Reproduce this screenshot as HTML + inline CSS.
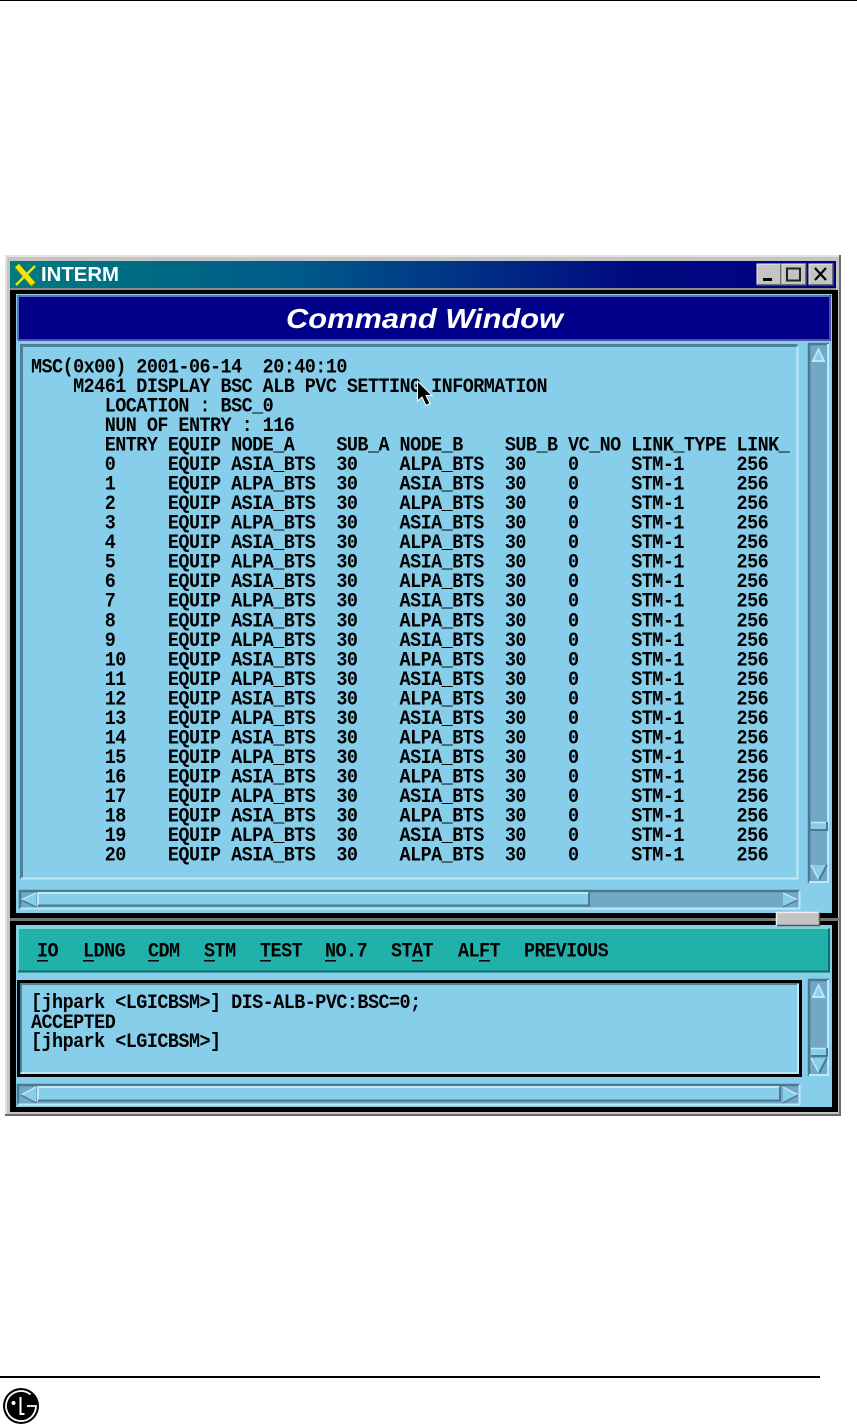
<!DOCTYPE html>
<html><head><meta charset="utf-8"><style>
html,body{margin:0;padding:0;background:#fff;width:857px;height:1425px;overflow:hidden}
svg{display:block}
.m{font:bold 20.500px "Liberation Mono",monospace;letter-spacing:-.6px;white-space:pre;fill:#000}
</style></head><body>
<svg width="857" height="1425" viewBox="0 0 857 1425" xmlns="http://www.w3.org/2000/svg">
<defs><linearGradient id="t" x1="0" x2="1" y1="0" y2="0"><stop offset="0" stop-color="#007a7e"/><stop offset=".35" stop-color="#005a8a"/><stop offset=".75" stop-color="#000a80"/><stop offset="1" stop-color="#000080"/></linearGradient></defs>
<rect x="0" y="0" width="857" height="1" fill="#000"/>
<rect x="0" y="1376" width="820" height="2" fill="#000"/>
<!-- window frame -->
<rect x="5" y="255" width="836" height="861" fill="#c4c4c4"/>
<rect x="5" y="255" width="836" height="2" fill="#e2e2e2"/>
<rect x="5" y="255" width="2" height="861" fill="#e2e2e2"/>
<rect x="839" y="255" width="2" height="861" fill="#6a6a6a"/>
<rect x="5" y="1114" width="836" height="2" fill="#6a6a6a"/>
<rect x="10" y="261" width="826" height="27" fill="url(#t)"/>
<rect x="10" y="288" width="826" height="2" fill="#8a8a8a"/>
<rect x="10" y="290" width="828" height="822" fill="#000"/>
<rect x="16" y="294" width="816" height="619" fill="#87ceeb"/>
<rect x="10" y="918" width="831" height="3" fill="#777"/>
<rect x="16" y="925" width="816" height="182" fill="#87ceeb"/>
<!-- title -->
<path d="M17 266l17 19" stroke="#8a7c00" stroke-width="6"/>
<path d="M35 266l-19 19" stroke="#f4e600" stroke-width="2.500"/>
<path d="M17 265.500l16 18.500" stroke="#f4e600" stroke-width="5"/>
<text x="41" y="281" font-family="Liberation Sans,sans-serif" font-size="20" font-weight="bold" fill="#fff" textLength="78" lengthAdjust="spacingAndGlyphs">INTERM</text>
<g>
<rect x="757" y="264" width="24" height="21" fill="#c4c4c4"/><path d="M757 285v-21h24" fill="none" stroke="#eee" stroke-width="1"/><path d="M757 285h24v-21" fill="none" stroke="#555" stroke-width="1.500"/>
<rect x="763" y="278" width="9" height="3" fill="#000"/>
<rect x="782" y="264" width="24" height="21" fill="#c4c4c4"/><path d="M782 285v-21h24" fill="none" stroke="#eee" stroke-width="1"/><path d="M782 285h24v-21" fill="none" stroke="#555" stroke-width="1.500"/>
<rect x="787" y="268.500" width="13" height="12" fill="none" stroke="#222" stroke-width="2"/>
<rect x="809" y="264" width="24" height="21" fill="#c4c4c4"/><path d="M809 285v-21h24" fill="none" stroke="#eee" stroke-width="1"/><path d="M809 285h24v-21" fill="none" stroke="#555" stroke-width="1.500"/>
<path d="M815 268l11 12M826 268l-11 12" stroke="#000" stroke-width="2.200"/>
</g>
<!-- Command bar -->
<rect x="17" y="295" width="814" height="45" fill="#000088"/>
<path d="M18 340v-44h812" fill="none" stroke="#6a6ac4" stroke-width="2"/>
<path d="M18 340h812v-44" fill="none" stroke="#5252a8" stroke-width="2"/>
<text x="286" y="328" font-family="Liberation Sans,sans-serif" font-size="28" font-weight="bold" font-style="italic" fill="#fff" textLength="277" lengthAdjust="spacingAndGlyphs">Command Window</text>
<!-- main text area -->
<path d="M21.500 879v-533.500h776" fill="none" stroke="#4f8196" stroke-width="3"/>
<path d="M21 878.500h776.500v-532" fill="none" stroke="#bfe8f7" stroke-width="2"/>
<!-- v scroll 1 -->
<rect x="808" y="343" width="21" height="540" fill="#72a8c6"/>
<path d="M809 883v-539h20" fill="none" stroke="#4a7a90" stroke-width="2.500"/>
<path d="M809 882h19v-538" fill="none" stroke="#bfe8f7" stroke-width="2"/>
<path d="M818.500 347l7 15h-14z" fill="#bfe8f7"/><path d="M818.500 351l4 9h-8z" fill="#87ceeb"/>
<rect x="811" y="822" width="16" height="9" fill="#87ceeb"/><path d="M811 831v-1h16v-8" fill="none" stroke="#4a7a90" stroke-width="2"/><path d="M811 822.500h15" stroke="#bfe8f7" stroke-width="1.500"/>
<path d="M811 865h16l-8 15z" fill="#87ceeb"/><path d="M811 865l8 15" stroke="#bfe8f7" stroke-width="1.500"/><path d="M827 865l-8 15" stroke="#4a7a90" stroke-width="2"/>
<!-- h scroll 1 -->
<rect x="20" y="890" width="780" height="19" fill="#72a8c6"/>
<path d="M20 909v-18h780" fill="none" stroke="#4a7a90" stroke-width="2.500"/>
<path d="M20 908.500h779.500v-18" fill="none" stroke="#bfe8f7" stroke-width="2"/>
<rect x="38" y="893" width="551" height="13" fill="#87ceeb"/>
<path d="M38 906v-13h551" fill="none" stroke="#bfe8f7" stroke-width="2"/>
<path d="M38 905.500h551v-13" fill="none" stroke="#4a7a90" stroke-width="2"/>
<path d="M36 893l-15 7 15 7z" fill="#87ceeb"/><path d="M21 900l15-7" stroke="#bfe8f7" stroke-width="1.500"/><path d="M21 900l15 7" stroke="#4a7a90" stroke-width="1.500"/>
<path d="M783 893l15 7-15 7z" fill="#87ceeb"/><path d="M783 893l15 7" stroke="#bfe8f7" stroke-width="1.500"/><path d="M783 907l15-7" stroke="#4a7a90" stroke-width="1.500"/>
<!-- sash -->
<rect x="776" y="912" width="44" height="14" fill="#c4c4c4"/>
<path d="M776.500 926v-13.500h43" fill="none" stroke="#eee" stroke-width="1.500"/>
<path d="M777 925.500h42.500v-13" fill="none" stroke="#555" stroke-width="1.500"/>
<!-- menu bar -->
<rect x="18" y="928" width="811" height="44" fill="#20b2aa"/>
<path d="M18 972v-44h811" fill="none" stroke="#7fd8d0" stroke-width="2"/>
<path d="M18 971.500h811v-43" fill="none" stroke="#0e6e68" stroke-width="2"/>
<g fill="#000"><rect x="37" y="960" width="11" height="1.500"/><rect x="83" y="960" width="11" height="1.500"/><rect x="148" y="960" width="11" height="1.500"/><rect x="204" y="960" width="11" height="1.500"/><rect x="260" y="960" width="11" height="1.500"/><rect x="325" y="960" width="11" height="1.500"/><rect x="412" y="960" width="11" height="1.500"/><rect x="479" y="960" width="11" height="1.500"/></g>
<!-- lower text area -->
<rect x="17" y="980" width="785" height="97" fill="#000"/>
<rect x="20" y="983" width="779" height="91" fill="#87ceeb"/>
<path d="M21 1073v-89h777" fill="none" stroke="#4f8196" stroke-width="2"/>
<path d="M21 1073h777v-89" fill="none" stroke="#bfe8f7" stroke-width="2"/>
<!-- v scroll 2 -->
<rect x="808" y="979" width="21" height="97" fill="#72a8c6"/>
<path d="M809 1076v-96h20" fill="none" stroke="#4a7a90" stroke-width="2.500"/>
<path d="M809 1075h19v-95" fill="none" stroke="#bfe8f7" stroke-width="2"/>
<path d="M818.500 983l7 15h-14z" fill="#bfe8f7"/><path d="M818.500 987l4 9h-8z" fill="#87ceeb"/>
<rect x="811" y="1048" width="16" height="8" fill="#87ceeb"/><path d="M811 1056h16v-8" fill="none" stroke="#4a7a90" stroke-width="2"/><path d="M811 1048.500h15" stroke="#bfe8f7" stroke-width="1.500"/>
<path d="M811 1058h16l-8 15z" fill="#87ceeb"/><path d="M811 1058l8 15" stroke="#bfe8f7" stroke-width="1.500"/><path d="M827 1058l-8 15" stroke="#4a7a90" stroke-width="2"/>
<!-- h scroll 2 -->
<rect x="18" y="1084" width="782" height="21" fill="#72a8c6"/>
<path d="M18 1105v-20h782" fill="none" stroke="#4a7a90" stroke-width="2.500"/>
<path d="M18 1104.500h781.500v-20" fill="none" stroke="#bfe8f7" stroke-width="2"/>
<rect x="38" y="1087" width="742" height="14" fill="#87ceeb"/>
<path d="M38 1101v-14h742" fill="none" stroke="#bfe8f7" stroke-width="2"/>
<path d="M38 1100.500h742v-14" fill="none" stroke="#4a7a90" stroke-width="2"/>
<path d="M36 1087l-15 8 15 8z" fill="#87ceeb"/><path d="M21 1095l15-8" stroke="#bfe8f7" stroke-width="1.500"/><path d="M21 1095l15 8" stroke="#4a7a90" stroke-width="1.500"/>
<path d="M783 1087l15 8-15 8z" fill="#87ceeb"/><path d="M783 1087l15 8" stroke="#bfe8f7" stroke-width="1.500"/><path d="M783 1103l15-8" stroke="#4a7a90" stroke-width="1.500"/>
<!-- all terminal text, condensed horizontally -->
<g transform="scale(.9,1)">
<text class="m" x="41.100" y="956.500">IO</text>
<text class="m" x="92.200" y="956.500">LDNG</text>
<text class="m" x="164.400" y="956.500">CDM</text>
<text class="m" x="226.700" y="956.500">STM</text>
<text class="m" x="288.900" y="956.500">TEST</text>
<text class="m" x="361.100" y="956.500">NO.7</text>
<text class="m" x="434.400" y="956.500">STAT</text>
<text class="m" x="508.900" y="956.500">ALFT</text>
<text class="m" x="582.200" y="956.500">PREVIOUS</text>
<text class="m" x="34.440" y="1008">[jhpark &lt;LGICBSM&gt;] DIS-ALB-PVC:BSC=0;</text>
<text class="m" x="34.440" y="1028">ACCEPTED</text>
<text class="m" x="34.440" y="1047">[jhpark &lt;LGICBSM&gt;]</text>
<text class="m" x="34.440" y="372.500">MSC(0x00) 2001-06-14  20:40:10</text>
<text class="m" x="34.440" y="392">    M2461 DISPLAY BSC ALB PVC SETTING INFORMATION</text>
<text class="m" x="34.440" y="411.500">       LOCATION : BSC_0</text>
<text class="m" x="34.440" y="431">       NUN OF ENTRY : 116</text>
<text class="m" x="34.440" y="450.600">       ENTRY EQUIP NODE_A    SUB_A NODE_B    SUB_B VC_NO LINK_TYPE LINK_</text>
<text class="m" x="34.440" y="470.100">       0     EQUIP ASIA_BTS  30    ALPA_BTS  30    0     STM-1     256</text>
<text class="m" x="34.440" y="489.600">       1     EQUIP ALPA_BTS  30    ASIA_BTS  30    0     STM-1     256</text>
<text class="m" x="34.440" y="509.100">       2     EQUIP ASIA_BTS  30    ALPA_BTS  30    0     STM-1     256</text>
<text class="m" x="34.440" y="528.700">       3     EQUIP ALPA_BTS  30    ASIA_BTS  30    0     STM-1     256</text>
<text class="m" x="34.440" y="548.200">       4     EQUIP ASIA_BTS  30    ALPA_BTS  30    0     STM-1     256</text>
<text class="m" x="34.440" y="567.700">       5     EQUIP ALPA_BTS  30    ASIA_BTS  30    0     STM-1     256</text>
<text class="m" x="34.440" y="587.200">       6     EQUIP ASIA_BTS  30    ALPA_BTS  30    0     STM-1     256</text>
<text class="m" x="34.440" y="606.700">       7     EQUIP ALPA_BTS  30    ASIA_BTS  30    0     STM-1     256</text>
<text class="m" x="34.440" y="626.300">       8     EQUIP ASIA_BTS  30    ALPA_BTS  30    0     STM-1     256</text>
<text class="m" x="34.440" y="645.800">       9     EQUIP ALPA_BTS  30    ASIA_BTS  30    0     STM-1     256</text>
<text class="m" x="34.440" y="665.300">       10    EQUIP ASIA_BTS  30    ALPA_BTS  30    0     STM-1     256</text>
<text class="m" x="34.440" y="684.800">       11    EQUIP ALPA_BTS  30    ASIA_BTS  30    0     STM-1     256</text>
<text class="m" x="34.440" y="704.300">       12    EQUIP ASIA_BTS  30    ALPA_BTS  30    0     STM-1     256</text>
<text class="m" x="34.440" y="723.900">       13    EQUIP ALPA_BTS  30    ASIA_BTS  30    0     STM-1     256</text>
<text class="m" x="34.440" y="743.400">       14    EQUIP ASIA_BTS  30    ALPA_BTS  30    0     STM-1     256</text>
<text class="m" x="34.440" y="762.900">       15    EQUIP ALPA_BTS  30    ASIA_BTS  30    0     STM-1     256</text>
<text class="m" x="34.440" y="782.400">       16    EQUIP ASIA_BTS  30    ALPA_BTS  30    0     STM-1     256</text>
<text class="m" x="34.440" y="801.900">       17    EQUIP ALPA_BTS  30    ASIA_BTS  30    0     STM-1     256</text>
<text class="m" x="34.440" y="821.500">       18    EQUIP ASIA_BTS  30    ALPA_BTS  30    0     STM-1     256</text>
<text class="m" x="34.440" y="841">       19    EQUIP ALPA_BTS  30    ASIA_BTS  30    0     STM-1     256</text>
<text class="m" x="34.440" y="860.500">       20    EQUIP ASIA_BTS  30    ALPA_BTS  30    0     STM-1     256</text>
</g>
<!-- cursor -->
<path d="M417.500 381v20l4.500-4 4 8.500 4-2-4-8h6z" fill="#000" stroke="#fff" stroke-width="1"/>
<!-- LG logo -->
<circle cx="21" cy="1406" r="18" fill="#000"/>
<path d="M30.600 1394.500A15 15 0 1 0 36 1406H27" fill="none" stroke="#fff" stroke-width="1.800"/>
<circle cx="13.500" cy="1403" r="2" fill="#fff"/>
<path d="M20.500 1397v17h4" fill="none" stroke="#fff" stroke-width="2"/>
</svg>
</body></html>
